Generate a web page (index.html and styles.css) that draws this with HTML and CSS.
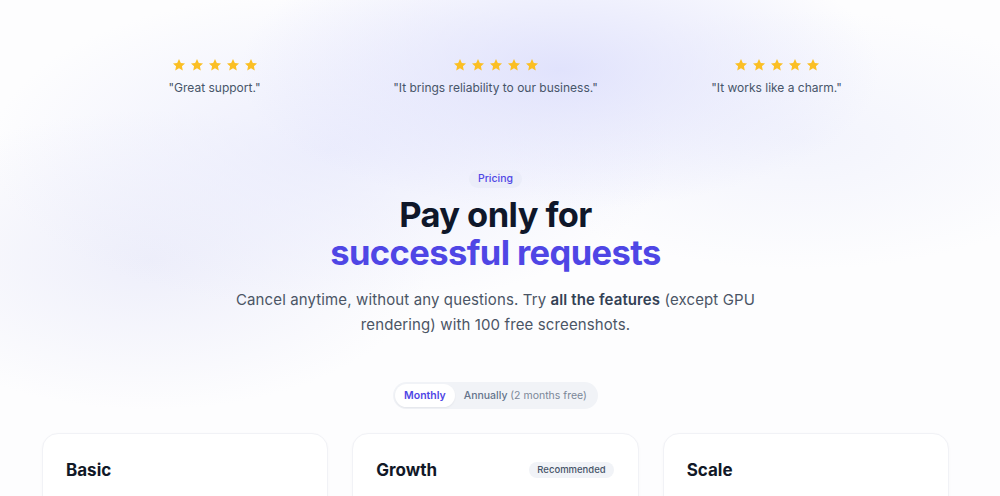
FILE: index.html
```html
<!DOCTYPE html>
<html lang="en">
<head>
<meta charset="utf-8">
<link rel="stylesheet" href="styles.css">
</head>
<body>
<div class="page">
  <section class="testimonials">
    <div class="testimonial">
      <div class="stars">
        <svg viewBox="0 0 20 20"><path d="M10 1.5l2.6 5.5 6 .7-4.4 4.1 1.2 5.9L10 14.8l-5.4 2.9 1.2-5.9L1.4 7.7l6-.7z"/></svg>
        <svg viewBox="0 0 20 20"><path d="M10 1.5l2.6 5.5 6 .7-4.4 4.1 1.2 5.9L10 14.8l-5.4 2.9 1.2-5.9L1.4 7.7l6-.7z"/></svg>
        <svg viewBox="0 0 20 20"><path d="M10 1.5l2.6 5.5 6 .7-4.4 4.1 1.2 5.9L10 14.8l-5.4 2.9 1.2-5.9L1.4 7.7l6-.7z"/></svg>
        <svg viewBox="0 0 20 20"><path d="M10 1.5l2.6 5.5 6 .7-4.4 4.1 1.2 5.9L10 14.8l-5.4 2.9 1.2-5.9L1.4 7.7l6-.7z"/></svg>
        <svg viewBox="0 0 20 20"><path d="M10 1.5l2.6 5.5 6 .7-4.4 4.1 1.2 5.9L10 14.8l-5.4 2.9 1.2-5.9L1.4 7.7l6-.7z"/></svg>
      </div>
      <p class="quote">"Great support."</p>
    </div>
    <div class="testimonial">
      <div class="stars">
        <svg viewBox="0 0 20 20"><path d="M10 1.5l2.6 5.5 6 .7-4.4 4.1 1.2 5.9L10 14.8l-5.4 2.9 1.2-5.9L1.4 7.7l6-.7z"/></svg>
        <svg viewBox="0 0 20 20"><path d="M10 1.5l2.6 5.5 6 .7-4.4 4.1 1.2 5.9L10 14.8l-5.4 2.9 1.2-5.9L1.4 7.7l6-.7z"/></svg>
        <svg viewBox="0 0 20 20"><path d="M10 1.5l2.6 5.5 6 .7-4.4 4.1 1.2 5.9L10 14.8l-5.4 2.9 1.2-5.9L1.4 7.7l6-.7z"/></svg>
        <svg viewBox="0 0 20 20"><path d="M10 1.5l2.6 5.5 6 .7-4.4 4.1 1.2 5.9L10 14.8l-5.4 2.9 1.2-5.9L1.4 7.7l6-.7z"/></svg>
        <svg viewBox="0 0 20 20"><path d="M10 1.5l2.6 5.5 6 .7-4.4 4.1 1.2 5.9L10 14.8l-5.4 2.9 1.2-5.9L1.4 7.7l6-.7z"/></svg>
      </div>
      <p class="quote">"It brings reliability to our business."</p>
    </div>
    <div class="testimonial">
      <div class="stars">
        <svg viewBox="0 0 20 20"><path d="M10 1.5l2.6 5.5 6 .7-4.4 4.1 1.2 5.9L10 14.8l-5.4 2.9 1.2-5.9L1.4 7.7l6-.7z"/></svg>
        <svg viewBox="0 0 20 20"><path d="M10 1.5l2.6 5.5 6 .7-4.4 4.1 1.2 5.9L10 14.8l-5.4 2.9 1.2-5.9L1.4 7.7l6-.7z"/></svg>
        <svg viewBox="0 0 20 20"><path d="M10 1.5l2.6 5.5 6 .7-4.4 4.1 1.2 5.9L10 14.8l-5.4 2.9 1.2-5.9L1.4 7.7l6-.7z"/></svg>
        <svg viewBox="0 0 20 20"><path d="M10 1.5l2.6 5.5 6 .7-4.4 4.1 1.2 5.9L10 14.8l-5.4 2.9 1.2-5.9L1.4 7.7l6-.7z"/></svg>
        <svg viewBox="0 0 20 20"><path d="M10 1.5l2.6 5.5 6 .7-4.4 4.1 1.2 5.9L10 14.8l-5.4 2.9 1.2-5.9L1.4 7.7l6-.7z"/></svg>
      </div>
      <p class="quote">"It works like a charm."</p>
    </div>
  </section>

  <section class="pricing-head">
    <span class="badge">Pricing</span>
    <h1 class="title">Pay only for<br><span class="accent">successful requests</span></h1>
    <p class="lead">Cancel anytime, without any questions. Try <strong>all the features</strong> (except GPU rendering) with 100 free screenshots.</p>
    <div class="toggle">
      <span class="opt active">Monthly</span>
      <span class="opt">Annually <span class="muted">(2 months free)</span></span>
    </div>
  </section>

  <section class="plans">
    <div class="card"><div class="card-head"><h2>Basic</h2></div></div>
    <div class="card"><div class="card-head"><h2>Growth</h2><span class="rec">Recommended</span></div></div>
    <div class="card"><div class="card-head"><h2>Scale</h2></div></div>
  </section>
</div>
</body>
</html>
```

FILE: styles.css
```css
* { box-sizing: border-box; }
html, body { margin: 0; padding: 0; }
body {
  font-family: Inter, "Noto Sans", "Liberation Sans", sans-serif;
  color: #0f172a;
  background:
    radial-gradient(ellipse 320px 140px at 560px 70px, rgba(222, 224, 252, 0.9), rgba(222, 224, 252, 0) 100%),
    radial-gradient(ellipse 340px 160px at 330px 150px, rgba(230, 232, 252, 0.75), rgba(230, 232, 252, 0) 100%),
    radial-gradient(ellipse 280px 150px at 150px 260px, rgba(236, 237, 250, 0.9), rgba(236, 237, 250, 0) 100%),
    radial-gradient(ellipse 300px 130px at 800px 140px, rgba(238, 240, 252, 0.7), rgba(238, 240, 252, 0) 100%),
    #fdfdfe;
  height: 496px;
  overflow: hidden;
}
.page {
  width: 907px;
  margin: 0 0 0 42px;
  padding-top: 58px;
}
.testimonials {
  display: grid;
  grid-template-columns: repeat(3, 281px);
  justify-content: center;
}
.testimonial {
  display: flex;
  flex-direction: column;
  align-items: center;
}
.stars { display: flex; gap: 4px; }
.stars svg { width: 14px; height: 14px; fill: #fbbf24; }
.quote {
  margin: 7px 0 0;
  font-size: 12px;
  line-height: 18px;
  color: #475569;
}
.pricing-head {
  display: flex;
  flex-direction: column;
  align-items: center;
  text-align: center;
  margin-top: 73px;
}
.badge {
  font-size: 10.5px;
  line-height: 18px;
  padding: 0 9px;
  border-radius: 9px;
  background: #ebedf9;
  color: #4f46e5;
  font-weight: 500;
}
.title {
  margin: 8px 0 0;
  font-size: 34.5px;
  line-height: 38px;
  font-weight: 700;
  letter-spacing: -0.6px;
  color: #0f172a;
}
.accent { color: #4f46e5; }
.lead {
  margin: 15px 0 0;
  max-width: 540px;
  font-size: 15px;
  letter-spacing: 0.12px;
  line-height: 25px;
  color: #4b5565;
}
.lead strong { color: #334155; font-weight: 600; }
.toggle {
  margin-top: 45px;
  display: flex;
  padding: 2px;
  border-radius: 14px;
  background: #f1f3f7;
  font-size: 10.5px;
}
.opt {
  padding: 0 9px;
  line-height: 23px;
  border-radius: 12px;
  color: #64748b;
  font-weight: 500;
}
.opt.active {
  background: #fff;
  color: #4f46e5;
  font-weight: 600;
  box-shadow: 0 1px 2px rgba(15, 23, 42, 0.06);
}
.muted { font-weight: 400; color: #7b8798; }
.plans {
  margin-top: 24px;
  display: grid;
  grid-template-columns: repeat(3, 1fr);
  gap: 24px;
}
.card {
  height: 120px;
  background: #fff;
  border: 1px solid #f1f2f6;
  border-radius: 16px;
  padding: 24px 24px 24px 23px;
  box-shadow: 0 1px 3px rgba(15, 23, 42, 0.03);
}
.card-head {
  display: flex;
  align-items: center;
  justify-content: space-between;
}
.card h2 {
  margin: 0;
  font-size: 17px;
  line-height: 24px;
  font-weight: 700;
  color: #111827;
}
.rec {
  font-size: 9.5px;
  line-height: 16px;
  padding: 0 8px;
  border-radius: 8px;
  background: #f1f3f7;
  color: #475569;
  font-weight: 500;
}
```
